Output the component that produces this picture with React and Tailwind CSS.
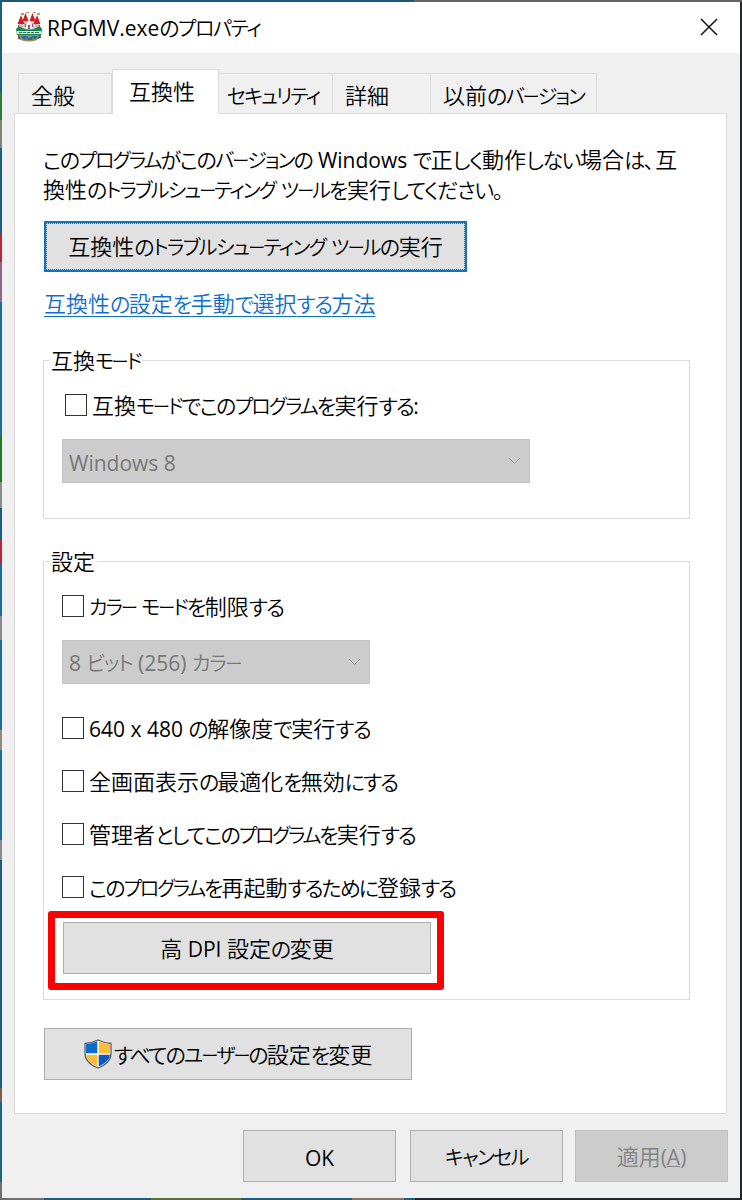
import React, { useState } from "react";

// Kana are set narrower than kanji, latin a little smaller
const runPattern =
  /ー|[\u30a1-\u30fa]+|[、。]|[\u3040-\u309f]+|[\u0020-\u007e]+|[^\u0020-\u007e\u3040-\u30ff、。]+/g;

const runClass = (run, hira, kata) => {
  if (run === "ー") {
    return "relative -top-px text-[17px] tracking-[-2px] [font-feature-settings:'palt']";
  }
  if (/[、。]/.test(run)) {
    return "text-[21px] tracking-[1px] [font-feature-settings:'palt']";
  }
  if (/[\u30a1-\u30fa]/.test(run)) {
    return `text-[20px] [font-feature-settings:'palt'] ${kata}`;
  }
  if (/[\u3040-\u309f]/.test(run)) {
    return `text-[21px] [font-feature-settings:'palt'] ${hira}`;
  }
  if (/[\u0020-\u007e]/.test(run)) {
    return "font-['Open_Sans','Noto_Sans',sans-serif] font-normal text-[21px]";
  }
  return "";
};

const Label = ({
  text,
  hira = "tracking-[-1.8px]",
  kata = "tracking-[-1.9px]",
  className = "-top-[1.5px]",
}) => (
  <span className={`relative whitespace-pre ${className}`}>
    {text.match(runPattern).map((run, i) => (
      <span key={i} className={`leading-none ${runClass(run, hira, kata)}`}>
        {run}
      </span>
    ))}
  </span>
);

const AppIcon = () => (
  <svg width="26" height="30" viewBox="0 0 26 30" className="relative -top-px shrink-0">
    <path d="M2 13h22l1 13q-12 5-23 1z" fill="#6c5a48" />
    <path d="M5 9h16v9H5z" fill="#ddd2d4" />
    <path d="M3 9h4v8H3zM8 6h3v9H8zM15 6h3v9h-3zM19 9h4v8h-4z" fill="#c8b8bc" />
    <path d="M5 3l3.500 9h-7zM9.500 1l3 8h-6zM16.500 1l3 8h-6zM21 3l3.500 9h-7z" fill="#cf1f24" />
    <path d="M5 1h3v2H5zM10 0h3v1h-3zM17 0h3v1h-3zM21 1h3v2h-3z" fill="#e08a62" />
    <path d="M10 11l3-3 3 3v6h-6z" fill="#f4eef0" />
    <path d="M9 12h1v3H9zM16 12h1v3h-1zM12 13h2v4h-2z" fill="#7d6b76" />
    <path d="M0 17q3-4 6-1 7 3 14 0 4-3 6 1l-1 6q-12 3-24 0z" fill="#158548" />
    <path d="M1 19h24v3H1z" fill="#d3ecdd" />
    <path d="M3 20.500h3m1 0h3m1 0h3m1 0h3m1 0h4" stroke="#2b7350" />
    <path d="M3 23l2 5q8 3 16 0l2-5z" fill="#a08c60" />
    <path d="M5 24h6l2 2 4-2h4v2l-5 2H8z" fill="#2864bd" />
    <path d="M9 26h3v2H9zM16 26h4v2h-4z" fill="#3ba14c" />
  </svg>
);

const ShieldIcon = () => (
  <svg width="28" height="30" viewBox="0 0 28 30" className="mr-0.5 shrink-0">
    <path
      d="M14 1Q8 4 1 4.500V14q0 10 13 15 13-5 13-15V4.500Q20 4 14 1z"
      fill="#fff"
      stroke="#5b6066"
      strokeWidth="1.300"
    />
    <path d="M13.300 2.300Q8 4.800 2 5.300V14.300h11.300z" fill="#0a6ccb" />
    <path d="M14.700 2.300Q20 4.800 26 5.300V14.300H14.700z" fill="#ffbd35" />
    <path d="M2 15.700h11.300v11.800Q3 23 2 15.700z" fill="#ffbd35" />
    <path d="M26 15.700H14.700v11.800Q25 23 26 15.700z" fill="#0a5cc0" />
  </svg>
);

const Button = ({ children, className = "", disabled = false }) => (
  <button
    type="button"
    disabled={disabled}
    className={`flex h-[52px] items-center justify-center border ${
      disabled
        ? "border-[#bfbfbf] bg-[#cccccc] text-[#838383]"
        : "border-[#adadad] bg-[#e1e1e1] text-black"
    } ${className}`}
  >
    {children}
  </button>
);

const Checkbox = ({ text, hira, kata, className = "" }) => {
  const [checked, setChecked] = useState(false);

  return (
    <label className={`flex h-[30px] items-center gap-[5px] ${className}`}>
      <input
        type="checkbox"
        checked={checked}
        onChange={(e) => setChecked(e.target.checked)}
        className="size-[22px] shrink-0 appearance-none border-[1.5px] border-[#333333] bg-white checked:bg-[#333333]"
      />
      <Label text={text} hira={hira} kata={kata} />
    </label>
  );
};

const Select = ({ children, className = "" }) => (
  <div
    className={`flex h-11 items-center justify-between border border-[#c3c3c3] bg-[#cccccc] pr-2 pl-1.5 text-[#777777] ${className}`}
  >
    {children}
    <svg width="13" height="8" viewBox="0 0 13 8" fill="none" stroke="#9d9d9d">
      <path d="M1 1l5.500 5.500L12 1" />
    </svg>
  </div>
);

const tabs = [
  { text: "全般", box: "w-[94px] border-l pl-3" },
  { text: "互換性", active: true },
  { text: "セキュリティ", box: "w-[114px] pl-2" },
  { text: "詳細", box: "w-[98px] pl-3" },
  { text: "以前のバージョン", box: "w-[166px] pl-3" },
];

const Tabs = () => (
  <div className="ml-1 flex h-[45px] items-end">
    {tabs.map((tab) =>
      tab.active ? (
        <div
          key={tab.text}
          className="z-10 flex h-[45px] w-[107px] items-center border border-b-0 border-[#dcdcdc] bg-white pl-4"
        >
          <Label text={tab.text} className="-top-0.5" />
        </div>
      ) : (
        <div
          key={tab.text}
          className={`flex h-[41px] items-center border-t border-r border-[#dcdcdc] pt-1 ${tab.box}`}
        >
          <Label text={tab.text} className="-top-0.5" hira="tracking-[-1.4px]" />
        </div>
      )
    )}
  </div>
);

// Slivers of the desktop that show around the window
const leftEdge = [
  "h-[90px] bg-[#1b5e82]",
  "h-[28px] bg-[#2f7d38]",
  "h-[28px] bg-[#7c8577]",
  "h-[86px] bg-[#1b5e82]",
  "h-[28px] bg-[#b3293c]",
  "h-[40px] bg-[#8d6884]",
  "h-[134px] bg-[#1b6e96]",
  "h-[46px] bg-[#1d7a26]",
  "h-[26px] bg-[#8b8b8b]",
  "h-[32px] bg-[#1b5e82]",
  "h-[24px] bg-[#b3293c]",
  "h-[52px] bg-[#1b6e96]",
  "h-[24px] bg-[#8b8b8b]",
  "h-[90px] bg-[#1b6e96]",
  "h-[20px] bg-[#94877c]",
  "h-[90px] bg-[#1b6e96]",
  "h-[20px] bg-[#8b8b8b]",
  "h-[228px] bg-[#1b5e82]",
  "h-[14px] bg-[#7c5f45]",
  "h-[80px] bg-[#1b6485]",
  "h-[16px] bg-[#6f6f6f]",
];

const bottomEdge = [
  "w-[44px] bg-[#6f6f6f]",
  "w-[107px] bg-[#1b5e82]",
  "w-[90px] bg-[#5d6e33]",
  "w-[111px] bg-[#1b5e82]",
  "w-[52px] bg-[#85745c]",
  "w-[11px] bg-[#1b5e82]",
  "grow bg-[#22252b]",
];

const App = () => {
  return (
    <div className="flex h-[1200px] w-[742px] flex-col font-['Noto_Sans_CJK_JP',sans-serif] text-[22px] leading-[30px] font-[350] text-black">
      <div className="flex h-0.5 shrink-0">
        <div className="w-[414px] bg-[#1b587a]" />
        <div className="grow bg-[#656565]" />
      </div>

      <div className="flex h-[1196px] shrink-0">
        <div className="w-0.5 shrink-0 overflow-hidden">
          {leftEdge.map((edge, i) => (
            <div key={i} className={edge} />
          ))}
        </div>

        <div className="flex w-[738px] flex-col bg-[#f0f0f0]">
          <div className="flex h-[51px] items-center justify-between bg-white pr-[22px] pl-3.5">
            <div className="flex items-center gap-[5px]">
              <AppIcon />
              <Label
                text="RPGMV.exeのプロパティ"
                kata="tracking-[-1.3px]"
                className="-top-0.5"
              />
            </div>
            <svg
              width="18"
              height="18"
              viewBox="0 0 18 18"
              stroke="#111"
              strokeWidth="1.500"
              className="relative -top-px"
            >
              <path d="M1 1l16 16M17 1L1 17" />
            </svg>
          </div>

          <div className="mt-4 ml-3">
            <Tabs />
            <div className="-mt-px h-[1001px] w-[713px] border border-[#dcdcdc] bg-white pt-[31px] pl-7">
              <p className="h-[60px]">
                <Label
                  text="このプログラムがこのバージョンの Windows で正しく動作しない場合は、互"
                  hira="tracking-[-1.4px]"
                  className="-top-0.5"
                />
                <br />
                <Label
                  text="換性のトラブルシューティング ツールを実行してください。"
                  hira="tracking-[-1.4px]"
                  kata="tracking-[-1.8px]"
                  className="-top-0.5"
                />
              </p>

              <button
                type="button"
                className="mt-4 ml-px flex h-[51px] w-[423px] items-center justify-center border-2 border-[#0f74cc] bg-[#e1e1e1] outline-1 -outline-offset-3 outline-dotted outline-[#555]"
              >
                <Label
                  text="互換性のトラブルシューティング ツールの実行"
                  hira="tracking-[-1.4px]"
                  kata="tracking-[-1.5px]"
                />
              </button>

              <a
                href="#"
                className="mt-[17px] ml-px block h-[30px] w-[331px] text-[#0f6fd0] underline decoration-1 underline-offset-2"
              >
                <Label
                  text="互換性の設定を手動で選択する方法"
                  hira="tracking-[-1.5px]"
                  className="-top-0.5"
                />
              </a>

              <fieldset className="mt-[26px] h-[174px] w-[647px] border border-[#dcdcdc] pl-[18px]">
                <legend className="-ml-[13px] h-[30px] px-0.5">
                  <Label text="互換モード" className="-top-px" kata="tracking-[-2.3px]" />
                </legend>
                <Checkbox
                  text="互換モードでこのプログラムを実行する:"
                  hira="tracking-[-1.6px]"
                  className="mt-[15px] ml-[3px]"
                />
                <Select className="mt-[19px] w-[468px]">
                  <Label text="Windows 8" className="top-0" />
                </Select>
              </fieldset>

              <fieldset className="mt-[27px] h-[454px] w-[647px] border border-[#dcdcdc] pl-[18px]">
                <legend className="-ml-[13px] h-[30px] px-0.5">
                  <Label text="設定" className="-top-px" />
                </legend>
                <Checkbox
                  text="カラー モードを制限する"
                  hira="tracking-[-1.6px]"
                  className="mt-[15px]"
                />
                <Select className="mt-[19px] w-[308px]">
                  <Label
                    text="8 ビット (256) カラー"
                    kata="tracking-[-1.1px]"
                    className="-top-px"
                  />
                </Select>
                <Checkbox
                  text="640 x 480 の解像度で実行する"
                  hira="tracking-[-1.4px]"
                  className="mt-[29px]"
                />
                <Checkbox
                  text="全画面表示の最適化を無効にする"
                  hira="tracking-[-2px]"
                  className="mt-[23px]"
                />
                <Checkbox
                  text="管理者としてこのプログラムを実行する"
                  hira="tracking-[-1.9px]"
                  kata="tracking-[-2.2px]"
                  className="mt-[23px]"
                />
                <Checkbox
                  text="このプログラムを再起動するために登録する"
                  hira="tracking-[-1.9px]"
                  kata="tracking-[-2.2px]"
                  className="mt-[23px]"
                />
                <div className="mt-[9px] -ml-3.5 h-[79px] w-[396px] rounded-[3px] border-7 border-[#ff0000] bg-white pt-1 pl-2">
                  <Button className="w-[368px]">
                    <Label text="高 DPI 設定の変更" className="-top-px" hira="tracking-[-1.4px]" />
                  </Button>
                </div>
              </fieldset>

              <Button className="mt-7 ml-px w-[368px]">
                <ShieldIcon />
                <Label text="すべてのユーザーの設定を変更" hira="tracking-[-1.9px]" />
              </Button>
            </div>
          </div>

          <div className="mt-4 flex justify-end gap-3 pr-3">
            <Button className="w-[153px]">
              <Label text="OK" className="top-0" />
            </Button>
            <Button className="ml-0.5 w-[153px]">
              <Label text="キャンセル" kata="tracking-[-1.5px]" />
            </Button>
            <Button className="w-[153px]" disabled>
              <span>
                <Label text="適用(" className="-top-px" />
                <Label text="A" className="-top-px underline decoration-1" />
                <Label text=")" className="-top-px" />
              </span>
            </Button>
          </div>
        </div>

        <div className="grow bg-[#25282c]" />
      </div>

      <div className="flex h-0.5 shrink-0">
        {bottomEdge.map((edge, i) => (
          <div key={i} className={edge} />
        ))}
      </div>
    </div>
  );
};

export default App;
